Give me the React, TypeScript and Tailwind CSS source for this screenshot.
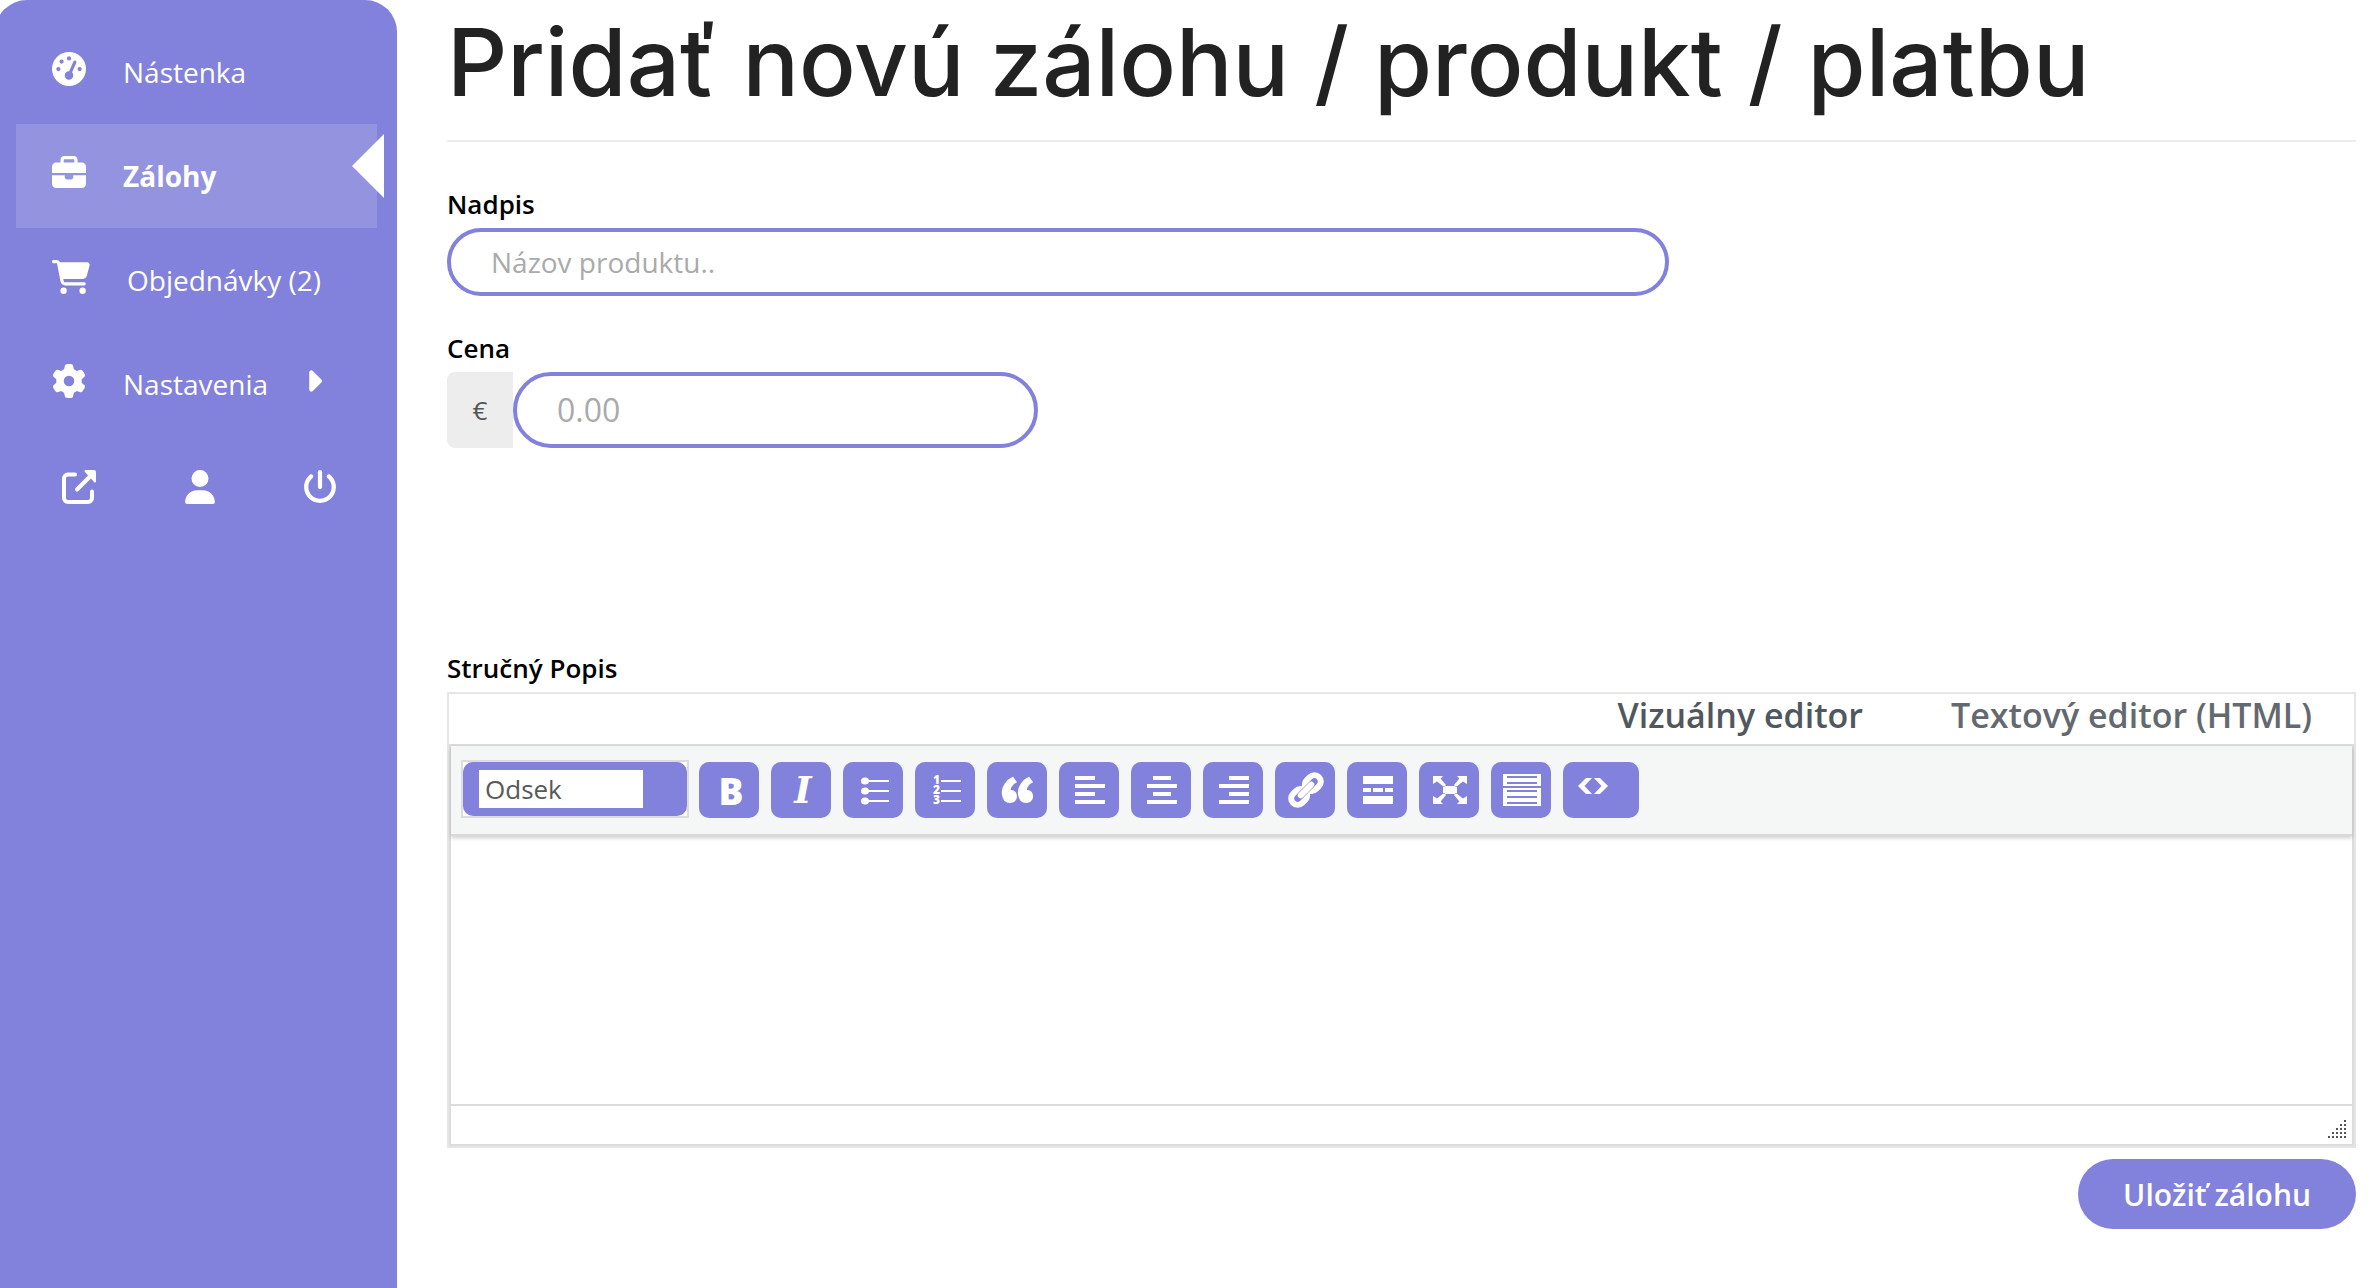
import React from "react";
import type { ReactNode } from "react";
import { FaBriefcase, FaCaretRight, FaCartShopping, FaGaugeHigh, FaGear, FaPowerOff, FaUser } from "react-icons/fa6";

function NavItem({ icon, label, active, children }: { icon: ReactNode; label: string; active?: boolean; children?: ReactNode }) {
  return (
    <li className={active ? "relative bg-white/15 font-bold" : "relative font-normal"}>
      <a
        href="#"
        aria-current={active ? "page" : undefined}
        className="flex h-[104px] items-center gap-[37px] pl-9 text-[28px]"
      >
        <span className="mb-1.5 text-[34px]">{icon}</span>
        <span>{label}</span>
        {children}
      </a>
      {active && (
        <span className="absolute -right-[7px] top-[10px] h-16 w-8 bg-white [clip-path:polygon(100%_0,100%_100%,0_50%)]" />
      )}
    </li>
  );
}

function ExternalIcon() {
  return (
    <svg viewBox="0 0 34 34" className="size-[34px]" fill="none" stroke="currentColor" strokeWidth="4" strokeLinecap="round">
      <path d="M13 4.5H6a4 4 0 0 0-4 4V28a4 4 0 0 0 4 4h20a4 4 0 0 0 4-4v-6.500" />
      <path d="M15 19.500 28 6.500" />
      <path d="M23.500 1h8.500a1 1 0 0 1 1 1v9.500z" fill="currentColor" strokeWidth="2" strokeLinejoin="round" />
    </svg>
  );
}

function ToolButton({ label, children, wide }: { label: string; children: ReactNode; wide?: boolean }) {
  return (
    <button
      type="button"
      aria-label={label}
      className={
        wide
          ? "flex h-14 w-[76px] items-center rounded-[10px] bg-[#8281db] pl-2.5 text-white"
          : "flex h-14 w-[60px] items-center justify-center rounded-[10px] bg-[#8281db] text-white"
      }
    >
      {children}
    </button>
  );
}

function Glyph({ d, weight = 0 }: { d: string; weight?: number }) {
  return (
    <svg viewBox="0 0 20 20" className="size-10" fill="currentColor" fillRule="evenodd" stroke={weight ? "currentColor" : "none"} strokeWidth={weight}>
      <path d={d} />
    </svg>
  );
}

const QUOTE =
  "M9.49 13.22c0-.74-.2-1.38-.61-1.9-.62-.78-1.83-.88-2.53-.72-.29-1.65 1.11-3.75 2.92-4.65L7.88 4c-2.73 1.3-5.42 4.28-4.96 8.05C3.21 14.43 4.59 16 6.54 16c.85 0 1.56-.25 2.12-.75s.83-1.18.83-2.03zm8.05 0c0-.74-.2-1.38-.61-1.9-.63-.78-1.83-.88-2.53-.72-.29-1.65 1.11-3.75 2.92-4.65L15.93 4c-2.73 1.3-5.41 4.28-4.95 8.05.29 2.38 1.66 3.95 3.61 3.95.85 0 1.56-.25 2.12-.75s.83-1.18.83-2.03z";
const LINK =
  "M17.74 2.76c1.68 1.69 1.68 4.41 0 6.1l-1.53 1.52c-1.12 1.12-2.7 1.47-4.14 1.09l2.62-2.61.76-.77.76-.76c.84-.84.84-2.2 0-3.04-.84-.85-2.2-.85-3.04 0l-.77.76-3.38 3.38c-.37-1.44-.02-3.02 1.1-4.14l1.52-1.53c1.69-1.68 4.42-1.68 6.1 0zM8.59 13.43l5.34-5.34c.42-.42.42-1.1 0-1.52-.44-.43-1.13-.39-1.53 0l-5.33 5.34c-.42.42-.42 1.1 0 1.52.44.43 1.13.39 1.52 0zm-.76 2.29l4.14-4.15c.38 1.44.03 3.02-1.09 4.14l-1.52 1.53c-1.69 1.68-4.41 1.68-6.1 0-1.68-1.68-1.68-4.42 0-6.1l1.53-1.52c1.12-1.12 2.7-1.47 4.14-1.1l-4.14 4.15c-.85.84-.85 2.2 0 3.05.84.84 2.2.84 3.04 0z";
const ALIGN_LEFT = "M3 3h10v2H3zM3 7h15v2H3zM3 11h10v2H3zM3 15h15v2H3z";
const ALIGN_CENTER = "M6 3h9v2H6zM3 7h15v2H3zM6 11h9v2H6zM3 15h15v2H3z";
const ALIGN_RIGHT = "M8 3h10v2H8zM3 7h15v2H3zM8 11h10v2H8zM3 15h15v2H3z";
const MORE = "M3 3h15v4H3zM3 9h4v2H3zM8 9h5v2H8zM14 9h4v2h-4zM3 13h15v4H3z";
const FULLSCREEN =
  "M7 8h7v4H7zM2 3h5L5.800 4.300 8.500 7.500 7.500 8.500 4 5.800 2 7zM19 3v4l-2-1.200-3.500 2.700-1-1L15.200 4.300 14 3zM2 17v-4l2 1.200 3.500-2.700 1 1-2.700 3.200L7 17zM19 17h-5l1.200-1.300-2.700-3.200 1-1 3.500 2.700 2-1.200z";
const KITCHEN =
  "M1 2h19v6H1zM3 3v1h15V3zM3 6v1h15V6zM1 9h19v9H1zM3 10v1h15v-1zM3 13v1h15v-1zM3 16v1h15v-1z";

const GRIP_DOTS = [0, 1, 2, 3, 4].flatMap((row) => Array.from({ length: row + 1 }, (_, i) => [16 - i * 4, row * 4]));

export default function App() {
  return (
    <div className="flex min-h-screen bg-white font-['Open_Sans',sans-serif]">
      <aside className="-ml-[5px] w-[402px] shrink-0 rounded-t-[32px] bg-[#8281db] pl-[21px] pr-5 pt-5 text-white">
        <nav>
          <ul>
            <NavItem icon={<FaGaugeHigh />} label="Nástenka" />
            <NavItem icon={<FaBriefcase />} label="Zálohy" active />
            <NavItem icon={<FaCartShopping className="w-[38px]" />} label="Objednávky (2)" />
            <NavItem icon={<FaGear />} label="Nastavenia">
              <FaCaretRight className="mb-1.5 w-[17px] text-[34px]" />
            </NavItem>
          </ul>
        </nav>
        <div className="flex h-[102px] items-center justify-between pl-[46px] pr-10 text-[34px]">
          <a href="#" aria-label="Zobraziť stránku"><ExternalIcon /></a>
          <a href="#" aria-label="Profil"><FaUser className="w-[30px]" /></a>
          <a href="#" aria-label="Odhlásiť"><FaPowerOff /></a>
        </div>
      </aside>

      <main className="min-w-0 flex-1 pl-[50px] pr-5">
        <h1 className="border-b-2 border-[#ececec] pb-4 font-['Inter',sans-serif] text-[94px] font-medium leading-[124px] text-[#222]">
          Pridať novú zálohu / produkt / platbu
        </h1>

        <form onSubmit={(e) => e.preventDefault()}>
          <label htmlFor="title" className="mb-2 mt-[46px] block text-[26px] font-semibold leading-8 text-black">
            Nadpis
          </label>
          <input
            id="title"
            type="text"
            placeholder="Názov produktu.."
            className="block h-[68px] w-[64%] rounded-full border-4 border-[#8281db] px-10 text-[28px] outline-none placeholder:text-[#aaa]"
          />

          <label htmlFor="price" className="mb-2 mt-9 block text-[26px] font-semibold leading-8 text-black">
            Cena
          </label>
          <div className="flex h-[76px]">
            <span className="flex w-[66px] items-center justify-center rounded-l-lg bg-[#ededed] text-[26px] text-[#555]">€</span>
            <input
              id="price"
              type="text"
              placeholder="0.00"
              className="w-[525px] rounded-full border-4 border-[#8281db] px-10 text-[32px] outline-none placeholder:text-[#aaa]"
            />
          </div>

          <label htmlFor="excerpt" className="mb-2 mt-[204px] block text-[26px] font-semibold leading-8 text-black">
            Stručný Popis
          </label>
          <div className="border-2 border-[#e5e5e5]">
            <div className="flex h-[50px] items-start justify-end gap-[88px] pr-[42px] text-[34px] font-semibold leading-[42px]">
              <button type="button" className="text-[#50575e]">Vizuálny editor</button>
              <button type="button" className="text-[#646970]">Textový editor (HTML)</button>
            </div>
            <div className="border-2 border-[#dcdcdc]">
              <div className="relative flex h-[90px] items-end gap-2.5 border-b-2 border-[#d9d9d9] bg-[#f5f7f7] pb-4 pl-2.5 shadow-[0_2px_4px_rgba(0,0,0,0.2)]">
                <div className="h-[58px] border-2 border-[#dcdcdc] bg-white">
                  <div className="flex h-[54px] w-56 items-center rounded-[10px] bg-[#8281db] pl-4">
                    <select aria-label="Formát" className="h-[38px] w-[164px] appearance-none bg-white pl-1.5 text-[26px] leading-[38px] text-[#595959]">
                      <option>Odsek</option>
                    </select>
                  </div>
                </div>
                <div className="flex gap-3">
                  <ToolButton label="Tučné">
                    <span className="pl-1 text-[37px] font-extrabold leading-none">B</span>
                  </ToolButton>
                  <ToolButton label="Kurzíva">
                    <span className="pl-1 font-['DejaVu_Serif',serif] text-[37px] font-bold italic leading-none">I</span>
                  </ToolButton>
                  <ToolButton label="Odrážkový zoznam">
                    <svg viewBox="0 0 40 40" className="size-10" fill="currentColor">
                      {[11, 21, 31].map((y) => (
                        <g key={y}>
                          <ellipse cx="12" cy={y} rx="4" ry="3.500" />
                          <rect x="15" y={y - 1} width="21" height="2" />
                        </g>
                      ))}
                    </svg>
                  </ToolButton>
                  <ToolButton label="Číslovaný zoznam">
                    <svg viewBox="0 0 40 40" className="size-10" fill="currentColor">
                      {[11, 21, 31].map((y, i) => (
                        <g key={y}>
                          <text x="8" y={y + 3} fontSize="12" fontWeight="800">{i + 1}</text>
                          <rect x="16" y={y - 1} width="20" height="2" />
                        </g>
                      ))}
                    </svg>
                  </ToolButton>
                  <ToolButton label="Citát"><Glyph d={QUOTE} weight={1} /></ToolButton>
                  <ToolButton label="Zarovnať vľavo"><Glyph d={ALIGN_LEFT} /></ToolButton>
                  <ToolButton label="Na stred"><Glyph d={ALIGN_CENTER} /></ToolButton>
                  <ToolButton label="Zarovnať vpravo"><Glyph d={ALIGN_RIGHT} /></ToolButton>
                  <ToolButton label="Odkaz"><Glyph d={LINK} weight={0.8} /></ToolButton>
                  <ToolButton label="Čítať viac"><Glyph d={MORE} /></ToolButton>
                  <ToolButton label="Celá obrazovka"><Glyph d={FULLSCREEN} /></ToolButton>
                  <ToolButton label="Panel nástrojov"><Glyph d={KITCHEN} /></ToolButton>
                  <ToolButton label="Zdrojový kód" wide>
                    <svg viewBox="0 0 40 40" className="size-10" fill="currentColor">
                      <path d="M5 16l8-8h6l-7.500 8 7.500 8h-6zM35 16l-8-8h-6l7.500 8-7.500 8h6z" />
                    </svg>
                  </ToolButton>
                </div>
              </div>
              <textarea id="excerpt" className="block h-[268px] w-full resize-none px-5 py-4 text-[28px] outline-none" />
              <div className="flex h-10 items-end justify-end border-t-2 border-[#dcdcdc] pb-1.5 pr-1.5">
                <svg viewBox="0 0 18 18" className="size-[18px]" fill="#555">
                  {GRIP_DOTS.map(([x, y]) => (
                    <rect key={`${x}-${y}`} x={x} y={y} width="2" height="2" />
                  ))}
                </svg>
              </div>
            </div>
          </div>

          <div className="mt-[11px] flex justify-end">
            <button type="submit" className="h-[70px] rounded-full bg-[#8281db] px-[45px] text-[30px] font-semibold text-white">
              Uložiť zálohu
            </button>
          </div>
        </form>
      </main>
    </div>
  );
}
